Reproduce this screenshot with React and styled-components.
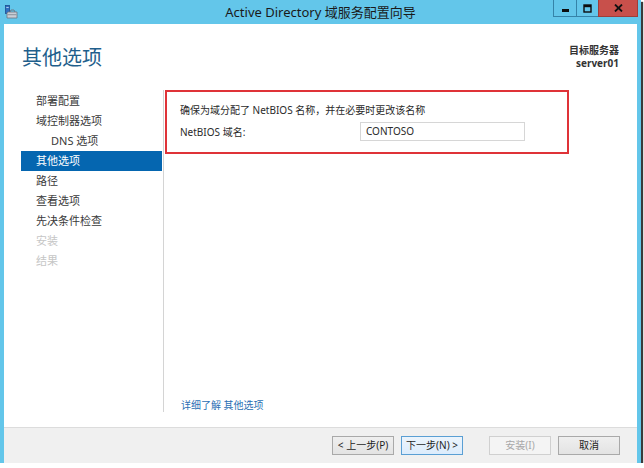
import React from "react";
import styled, { createGlobalStyle } from "styled-components";

const Global = createGlobalStyle`
  html, body { margin: 0; padding: 0; background: #ffffff; }
  body { font-family: "Segoe UI", "Noto Sans", "Noto Sans CJK SC", sans-serif; }
  * { box-sizing: border-box; }
`;

const FONT = `"Noto Sans", "Noto Sans CJK SC", sans-serif`;

const Window = styled.div`
  width: 641px;
  height: 463px;
  background: #63c6ea;
  display: flex;
  flex-direction: column;
  box-shadow: 2px 2px 1px 0 #3a3a3a;
`;

const TitleBar = styled.div`
  height: 24px;
  display: grid;
  grid-template-columns: 1fr auto 1fr;
  align-items: start;
`;

const TitleIcon = styled.div`
  padding: 5px 0 0 5px;
  display: flex;
`;

const TitleText = styled.div`
  font-family: ${FONT};
  font-size: 13px;
  line-height: 24px;
  color: #1a1a1a;
  white-space: nowrap;
`;

const Captions = styled.div`
  display: flex;
  justify-content: flex-end;
  padding-right: 3px;
`;

const CapButton = styled.div`
  width: ${(p) => p.$w}px;
  height: 17px;
  background: ${(p) => (p.$close ? "#c8504b" : "#63c6ea")};
  border: 1px solid ${(p) => (p.$close ? "#9e3e3a" : "#3583a8")};
  border-top: none;
  margin-left: -1px;
  display: flex;
  align-items: center;
  justify-content: center;
`;

const Client = styled.div`
  flex: 1;
  margin: 0 4px 0 4px;
  background: #ffffff;
  display: flex;
  flex-direction: column;
  min-height: 0;
`;

const Header = styled.div`
  height: 66px;
  display: flex;
  justify-content: space-between;
  align-items: flex-start;
  padding: 20px 18px 0 18px;
`;

const Heading = styled.h1`
  margin: 0;
  font-family: ${FONT};
  font-weight: 400;
  font-size: 20px;
  line-height: 27px;
  color: #1f5f8c;
`;

const Target = styled.div`
  text-align: right;
  font-family: ${FONT};
  font-weight: 700;
  font-size: 10px;
  line-height: 13px;
  color: #333333;
`;

const Body = styled.div`
  flex: 1;
  display: flex;
  padding-bottom: 15px;
  min-height: 0;
`;

const Nav = styled.ul`
  list-style: none;
  margin: 0 0 0 17px;
  padding: 1px 0 0 0;
  width: 143px;
  border-right: 1px solid #d4d4d4;
`;

const NavItem = styled.li`
  height: 20px;
  line-height: 20px;
  font-family: ${FONT};
  font-size: 11px;
  padding-left: ${(p) => (p.$indent ? 30 : 15)}px;
  margin-right: 1px;
  color: ${(p) => (p.$active ? "#ffffff" : p.$disabled ? "#c6c6c6" : "#3a3a3a")};
  background: ${(p) => (p.$active ? "#0566b0" : "transparent")};
  white-space: nowrap;
`;

const Content = styled.div`
  flex: 1;
  display: flex;
  flex-direction: column;
  justify-content: space-between;
  padding-left: 1px;
`;

const Highlight = styled.div`
  width: 404px;
  height: 64px;
  border: 2px solid #df3338;
  padding: 11px 0 0 13px;
  font-family: ${FONT};
  font-size: 10px;
  color: #2a2a2a;
`;

const Line = styled.div`
  line-height: 14px;
  white-space: nowrap;
`;

const FieldRow = styled.div`
  display: grid;
  grid-template-columns: 180px 165px;
  align-items: center;
  margin-top: 5px;
`;

const Input = styled.div`
  height: 19px;
  border: 1px solid #d6d6d6;
  background: #fff;
  padding-left: 5px;
  line-height: 17px;
  font-size: 10px;
  color: #2a2a2a;
`;

const Link = styled.a`
  font-family: ${FONT};
  font-size: 10px;
  line-height: 14px;
  color: #2a6fb4;
  padding-left: 16px;
  text-decoration: none;
  white-space: nowrap;
`;

const Footer = styled.div`
  height: 36px;
  border-top: 1px solid #dcdcdc;
  background: #f0f0f0;
  display: flex;
  align-items: center;
  justify-content: flex-end;
  padding: 0 17px 0 0;
`;

const Button = styled.div`
  width: 62px;
  height: 19px;
  margin-left: ${(p) => p.$gap || 0}px;
  border: 1px solid ${(p) => (p.$default ? "#5a9fd4" : p.$disabled ? "#d0d0d0" : "#a9a9a9")};
  background: ${(p) =>
    p.$disabled ? "#f4f4f4" : p.$default ? "linear-gradient(#ecf4fc, #dcecfc)" : "linear-gradient(#efefef, #e3e3e3)"};
  color: ${(p) => (p.$disabled ? "#a8a8a8" : "#1e1e1e")};
  font-family: ${FONT};
  font-size: 10px;
  line-height: 17px;
  text-align: center;
  white-space: nowrap;
`;

const AppIcon = () => (
  <svg width="13" height="14" viewBox="0 0 13 14">
    <rect x="0.5" y="0.5" width="4" height="8" fill="#2f6fc0" stroke="#1d4f8f" strokeWidth="0.8" />
    <rect x="1.3" y="2" width="2.4" height="0.8" fill="#cfe3f7" />
    <path d="M3 7 L12 7 L12 13 L2 13 L2 8 Z" fill="#c9ced6" stroke="#6d7580" strokeWidth="0.8" />
    <path d="M5 7 L6 5 L9 5 L10 7" fill="none" stroke="#6d7580" strokeWidth="0.9" />
    <rect x="2.5" y="9.2" width="9" height="1" fill="#8a929c" />
  </svg>
);

const MinGlyph = () => (
  <svg width="9" height="9" viewBox="0 0 9 9">
    <rect x="1" y="5" width="7" height="3" fill="#0d0d0d" />
  </svg>
);

const MaxGlyph = () => (
  <svg width="9" height="9" viewBox="0 0 9 9">
    <rect x="1" y="1" width="7" height="7" fill="none" stroke="#0d0d0d" strokeWidth="1.4" />
    <rect x="1" y="1" width="7" height="2.2" fill="#0d0d0d" />
  </svg>
);

const CloseGlyph = () => (
  <svg width="9" height="8" viewBox="0 0 9 8">
    <path d="M1 0.5 L8 7.5 M8 0.5 L1 7.5" stroke="#111" strokeWidth="1.8" />
  </svg>
);

const navItems = [
  { label: "部署配置" },
  { label: "域控制器选项" },
  { label: "DNS 选项", indent: true },
  { label: "其他选项", active: true },
  { label: "路径" },
  { label: "查看选项" },
  { label: "先决条件检查" },
  { label: "安装", disabled: true },
  { label: "结果", disabled: true },
];

export default function App() {
  return (
    <>
      <Global />
      <Window>
        <TitleBar>
          <TitleIcon>
            <AppIcon />
          </TitleIcon>
          <TitleText>Active Directory 域服务配置向导</TitleText>
          <Captions>
            <CapButton $w={24}>
              <MinGlyph />
            </CapButton>
            <CapButton $w={23}>
              <MaxGlyph />
            </CapButton>
            <CapButton $w={40} $close>
              <CloseGlyph />
            </CapButton>
          </Captions>
        </TitleBar>
        <Client>
          <Header>
            <Heading>其他选项</Heading>
            <Target>
              <div>目标服务器</div>
              <div>server01</div>
            </Target>
          </Header>
          <Body>
            <Nav>
              {navItems.map((it) => (
                <NavItem key={it.label} $indent={it.indent} $active={it.active} $disabled={it.disabled}>
                  {it.label}
                </NavItem>
              ))}
            </Nav>
            <Content>
              <Highlight>
                <Line>确保为域分配了 NetBIOS 名称，并在必要时更改该名称</Line>
                <FieldRow>
                  <Line>NetBIOS 域名:</Line>
                  <Input>CONTOSO</Input>
                </FieldRow>
              </Highlight>
              <Link href="#">详细了解 其他选项</Link>
            </Content>
          </Body>
          <Footer>
            <Button>&lt; 上一步(P)</Button>
            <Button $gap={7} $default>下一步(N) &gt;</Button>
            <Button $gap={26} $disabled>安装(I)</Button>
            <Button $gap={7}>取消</Button>
          </Footer>
        </Client>
      </Window>
    </>
  );
}
